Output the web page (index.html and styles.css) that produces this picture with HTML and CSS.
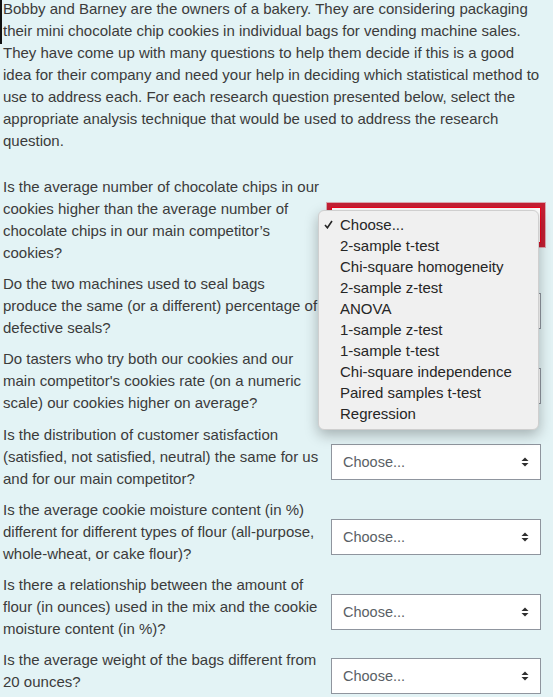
FILE: index.html
```html
<!DOCTYPE html>
<html lang="en">
<head>
<meta charset="utf-8">
<title>Bakery statistics question</title>
<link rel="stylesheet" href="styles.css">
</head>
<body>
<div class="page">
  <p class="intro">Bobby and Barney are the owners of a bakery. They are considering packaging<br>their mini chocolate chip cookies in individual bags for vending machine sales.<br>They have come up with many questions to help them decide if this is a good<br>idea for their company and need your help in deciding which statistical method to<br>use to address each. For each research question presented below, select the<br>appropriate analysis technique that would be used to address the research<br>question.</p>

  <div class="qlist">
    <div class="qrow">
      <div class="qtext">Is the average number of chocolate chips in our<br>cookies higher than the average number of<br>chocolate chips in our main competitor’s<br>cookies?</div>
      <div class="sel invalid open">
        <span class="sel-label">Choose...</span>
        <svg class="arrows" width="8" height="10" viewBox="0 0 8 10"><polygon points="0.5,4 4,0.5 7.5,4"/><polygon points="0.5,6 4,9.5 7.5,6"/></svg>
        <ul class="menu">
          <li class="checked"><svg class="check" width="9" height="9" viewBox="0 0 9 9"><path d="M1 5 L3.4 7.8 L8 1"/></svg>Choose...</li>
          <li>2-sample t-test</li>
          <li>Chi-square homogeneity</li>
          <li>2-sample z-test</li>
          <li>ANOVA</li>
          <li>1-sample z-test</li>
          <li>1-sample t-test</li>
          <li>Chi-square independence</li>
          <li>Paired samples t-test</li>
          <li>Regression</li>
        </ul>
      </div>
    </div>

    <div class="qrow">
      <div class="qtext">Do the two machines used to seal bags<br>produce the same (or a different) percentage of<br>defective seals?</div>
      <div class="sel">
        <span class="sel-label">Choose...</span>
        <svg class="arrows" width="8" height="10" viewBox="0 0 8 10"><polygon points="0.5,4 4,0.5 7.5,4"/><polygon points="0.5,6 4,9.5 7.5,6"/></svg>
      </div>
    </div>

    <div class="qrow">
      <div class="qtext">Do tasters who try both our cookies and our<br>main competitor's cookies rate (on a numeric<br>scale) our cookies higher on average?</div>
      <div class="sel">
        <span class="sel-label">Choose...</span>
        <svg class="arrows" width="8" height="10" viewBox="0 0 8 10"><polygon points="0.5,4 4,0.5 7.5,4"/><polygon points="0.5,6 4,9.5 7.5,6"/></svg>
      </div>
    </div>

    <div class="qrow">
      <div class="qtext">Is the distribution of customer satisfaction<br>(satisfied, not satisfied, neutral) the same for us<br>and for our main competitor?</div>
      <div class="sel">
        <span class="sel-label">Choose...</span>
        <svg class="arrows" width="8" height="10" viewBox="0 0 8 10"><polygon points="0.5,4 4,0.5 7.5,4"/><polygon points="0.5,6 4,9.5 7.5,6"/></svg>
      </div>
    </div>

    <div class="qrow">
      <div class="qtext">Is the average cookie moisture content (in %)<br>different for different types of flour (all-purpose,<br>whole-wheat, or cake flour)?</div>
      <div class="sel">
        <span class="sel-label">Choose...</span>
        <svg class="arrows" width="8" height="10" viewBox="0 0 8 10"><polygon points="0.5,4 4,0.5 7.5,4"/><polygon points="0.5,6 4,9.5 7.5,6"/></svg>
      </div>
    </div>

    <div class="qrow">
      <div class="qtext">Is there a relationship between the amount of<br>flour (in ounces) used in the mix and the cookie<br>moisture content (in %)?</div>
      <div class="sel">
        <span class="sel-label">Choose...</span>
        <svg class="arrows" width="8" height="10" viewBox="0 0 8 10"><polygon points="0.5,4 4,0.5 7.5,4"/><polygon points="0.5,6 4,9.5 7.5,6"/></svg>
      </div>
    </div>

    <div class="qrow">
      <div class="qtext">Is the average weight of the bags different from<br>20 ounces?</div>
      <div class="sel">
        <span class="sel-label">Choose...</span>
        <svg class="arrows" width="8" height="10" viewBox="0 0 8 10"><polygon points="0.5,4 4,0.5 7.5,4"/><polygon points="0.5,6 4,9.5 7.5,6"/></svg>
      </div>
    </div>
  </div>
</div>
</body>
</html>
```

FILE: styles.css
```css
html, body {
  margin: 0;
  padding: 0;
  background: #e3f3f5;
}

body {
  font-family: "Liberation Sans", Arial, sans-serif;
  font-size: 15px;
  line-height: 22px;
  color: #3b3b3b;
}

.page {
  padding-left: 3px;
  width: 550px;
}

.intro {
  position: relative;
  margin: -2px 0 24px 0;
  white-space: nowrap;
}

.intro::before {
  content: "";
  position: absolute;
  left: -3px;
  top: 0;
  width: 2px;
  height: 46px;
  background: #111;
}

.qlist {
  display: flex;
  flex-direction: column;
}

.qrow {
  display: flex;
  align-items: center;
}

.qrow:nth-child(4) {
  margin-top: 1px;
}

.qtext {
  width: 322px;
  padding-bottom: 9px;
  flex: none;
  white-space: nowrap;
}

.sel {
  position: relative;
  box-sizing: border-box;
  flex: none;
  margin-left: 6px;
  width: 210px;
  height: 36px;
  background: #fff;
  border: 1px solid #8f959e;
  display: flex;
  align-items: center;
  justify-content: space-between;
  padding: 0 11px 0 11px;
  font-size: 14.5px;
  color: #5a5f66;
}

.sel.invalid {
  border-color: #f0001c;
  box-shadow: 0 0 0 4px #c41f33, 0 0 0 5px #d9a8b0;
}

.arrows {
  fill: #2e2e2e;
}

.menu {
  position: absolute;
  z-index: 10;
  left: -14px;
  top: 2px;
  width: 221px;
  box-sizing: border-box;
  margin: 0;
  padding: 3px 0 5px 0;
  list-style: none;
  background: #f0f0f0;
  border: 1px solid #cfcfcf;
  border-radius: 6px;
  box-shadow: 0 5px 14px rgba(0, 0, 0, 0.28);
  font-size: 15px;
  line-height: 21px;
  color: #262626;
}

.menu li {
  position: relative;
  padding-left: 21px;
  white-space: nowrap;
}

.check {
  position: absolute;
  left: 5px;
  top: 6px;
  fill: none;
  stroke: #262626;
  stroke-width: 1.6;
}
```
